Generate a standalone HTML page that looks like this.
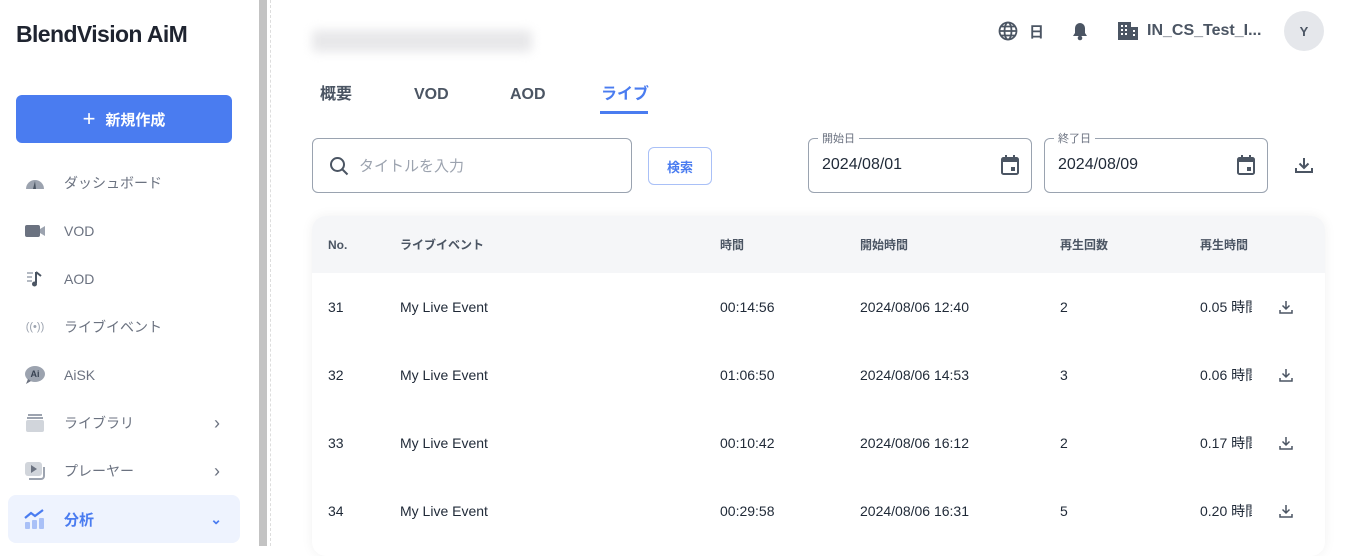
<!DOCTYPE html>
<html><head><meta charset="utf-8"><style>
*{box-sizing:border-box;margin:0;padding:0}
body{width:1363px;height:546px;overflow:hidden;background:#fff;font-family:"Liberation Sans","Noto Sans CJK JP",sans-serif;color:#1f2937;position:relative}
.abs{position:absolute}
.side{left:0;top:0;width:256px;height:546px;background:#fff}
.logo{left:16px;top:21px;font-size:23px;font-weight:bold;color:#1f2430;letter-spacing:-0.6px;line-height:26px}
.btn{left:16px;top:95px;width:216px;height:48px;background:#4a7cf0;border-radius:6px;color:#fff;font-size:15px;font-weight:bold;display:flex;align-items:center;justify-content:center;gap:10px}
.nav{left:24px;width:216px;height:48px;display:flex;align-items:center;font-size:14px;color:#6b7280}
.nav .ic{width:22px;height:22px;margin-right:18px;display:flex;align-items:center;justify-content:center}
.chev{position:absolute;right:20px;color:#6b7280;font-size:18px}
.div1{left:259px;top:0;width:8px;height:546px;background:#c3c3c3}
.div2{left:270px;top:0;height:546px;border-left:1px dashed #ddd}
.tab{top:85px;font-size:16px;font-weight:bold;color:#4b5563;line-height:20px}
.inp{border:1px solid #9aa3b0;border-radius:6px}
.lbl{font-size:11px;color:#6b7280;background:#fff;padding:0 4px}
.card{left:312px;top:216px;width:1013px;height:340px;border-radius:14px;background:#fff;box-shadow:0 0 12px rgba(0,0,0,0.06);overflow:hidden}
.hdr{left:0;top:0;width:100%;height:57px;background:#f5f6f8}
.th{font-size:12px;font-weight:bold;color:#4b5563;top:22px;line-height:14px}
.td{font-size:14px;color:#1f2937;line-height:16px}
.w{width:52px;overflow:hidden;white-space:nowrap;left:888px}
</style></head><body>
<div class="abs side">
<div class="abs logo">BlendVision AiM</div>
<div class="abs btn"><span style="font-size:22px;font-weight:normal">+</span>新規作成</div>
<div class="abs nav" style="top:159px"><span class="ic"><svg width="20" height="20"><path d="M1 16a9 9 0 0118 0z" fill="#9ca3af"/><path d="M10 8l-2 8h3z" fill="#4b5563"/></svg></span>ダッシュボード</div>
<div class="abs nav" style="top:207px"><span class="ic"><svg width="20" height="14"><rect x="0" y="1" width="15" height="12" rx="2" fill="#6b7280"/><path d="M15 5l5-3v10l-5-3z" fill="#9ca3af"/></svg></span>VOD</div>
<div class="abs nav" style="top:255px"><span class="ic"><svg width="20" height="20"><path d="M2 4h6M2 8h5M2 12h5" stroke="#9ca3af" stroke-width="1.5"/><path d="M11 3v11" stroke="#4b5563" stroke-width="2"/><circle cx="9.5" cy="15" r="2.5" fill="#4b5563"/><path d="M11 3l5 4" stroke="#4b5563" stroke-width="2"/></svg></span>AOD</div>
<div class="abs nav" style="top:303px"><span class="ic" style="font-size:11px;color:#9ca3af">((•))</span>ライブイベント</div>
<div class="abs nav" style="top:351px"><span class="ic"><svg width="22" height="22"><ellipse cx="11" cy="10" rx="10" ry="8" fill="#9ca3af"/><path d="M4 15l-2 5 5-3z" fill="#6b7280"/><text x="11" y="13" font-size="9" font-weight="bold" fill="#374151" text-anchor="middle" font-family="Liberation Sans">Ai</text></svg></span>AiSK</div>
<div class="abs nav" style="top:399px"><span class="ic"><svg width="20" height="20"><rect x="3" y="1" width="14" height="2" fill="#9ca3af"/><rect x="2" y="4" width="16" height="2" fill="#9ca3af"/><rect x="1" y="7" width="18" height="12" rx="2" fill="#d1d5db"/></svg></span>ライブラリ<span class="chev">›</span></div>
<div class="abs nav" style="top:447px"><span class="ic"><svg width="22" height="20"><rect x="1" y="1" width="17" height="14" rx="3" fill="#d1d5db"/><path d="M7 4v8l6-4z" fill="#6b7280"/><path d="M20 6v9a3 3 0 01-3 3H5" stroke="#9ca3af" stroke-width="2" fill="none"/></svg></span>プレーヤー<span class="chev">›</span></div>
<div class="abs nav" style="left:8px;width:232px;padding-left:16px;top:495px;background:#eef3fe;border-radius:8px;color:#4a7cf0;font-weight:bold;font-size:15px"><span class="ic"><svg width="22" height="22"><rect x="1" y="14" width="5" height="7" rx="1" fill="#a9c0f7"/><rect x="8" y="12" width="5" height="9" rx="1" fill="#a9c0f7"/><rect x="15" y="10" width="5" height="11" rx="1" fill="#a9c0f7"/><path d="M1 10l6-5 4 3 8-6" stroke="#4a7cf0" stroke-width="2.2" fill="none"/></svg></span>分析<span class="chev" style="color:#4a7cf0;font-size:14px;right:18px">⌄</span></div>
</div>
<div class="abs div1"></div><div class="abs div2"></div>

<div class="abs" style="left:312px;top:30px;width:220px;height:22px;background:#e8e8ea;filter:blur(5px);border-radius:4px"></div>

<div class="abs" style="left:998px;top:21px"><svg width="20" height="20" viewBox="0 0 20 20" fill="none" stroke="#4b5563" stroke-width="1.8"><circle cx="10" cy="10" r="8.5"/><ellipse cx="10" cy="10" rx="3.5" ry="8.5"/><path d="M1.5 10h17M3 5.5h14M3 14.5h14"/></svg></div>
<div class="abs" style="left:1029px;top:21px;font-size:15px;font-weight:bold;color:#4b5563">日</div>
<div class="abs" style="left:1070px;top:21px"><svg width="20" height="20"><path d="M10 2a5 5 0 00-5 5v5l-2 3h14l-2-3V7a5 5 0 00-5-5z" fill="#4b5563"/><circle cx="10" cy="17" r="2.3" fill="#4b5563"/></svg></div>
<div class="abs" style="left:1118px;top:22px"><svg width="20" height="18"><rect x="0" y="0" width="13" height="18" fill="#4b5563"/><rect x="13" y="5" width="7" height="13" fill="#4b5563"/><g fill="#fff"><rect x="3" y="3" width="2" height="2"/><rect x="7" y="3" width="2" height="2"/><rect x="3" y="7" width="2" height="2"/><rect x="7" y="7" width="2" height="2"/><rect x="3" y="11" width="2" height="2"/><rect x="7" y="11" width="2" height="2"/><rect x="15" y="8" width="2" height="2"/><rect x="15" y="12" width="2" height="2"/></g></svg></div>
<div class="abs" style="left:1147px;top:22px;font-size:16px;font-weight:bold;color:#4b5563">IN_CS_Test_I...</div>
<div class="abs" style="left:1284px;top:11px;width:40px;height:40px;border-radius:50%;background:#e5e7eb;display:flex;align-items:center;justify-content:center;font-size:13px;font-weight:bold;color:#4b5563">Y</div>

<div class="abs tab" style="left:320px">概要</div>
<div class="abs tab" style="left:414px">VOD</div>
<div class="abs tab" style="left:510px">AOD</div>
<div class="abs tab" style="left:601px;color:#4a7cf0">ライブ</div>
<div class="abs" style="left:600px;top:111px;width:48px;height:3px;background:#4a7cf0"></div>

<div class="abs inp" style="left:312px;top:138px;width:320px;height:55px"></div>
<div class="abs" style="left:329px;top:156px"><svg width="20" height="20" fill="none" stroke="#4b5563" stroke-width="2"><circle cx="8.5" cy="8.5" r="6.5"/><path d="M13.5 13.5l5 5"/></svg></div>
<div class="abs" style="left:359px;top:155px;font-size:15px;color:#9ca3af">タイトルを入力</div>
<div class="abs" style="left:648px;top:147px;width:64px;height:38px;border:1px solid #a9c0f7;border-radius:6px;display:flex;align-items:center;justify-content:center;font-size:13px;font-weight:bold;color:#4a7cf0">検索</div>

<div class="abs inp" style="left:808px;top:138px;width:224px;height:55px"></div>
<div class="abs lbl" style="left:818px;top:130px">開始日</div>
<div class="abs" style="left:822px;top:156px;font-size:16px">2024/08/01</div>
<div class="abs inp" style="left:1044px;top:138px;width:224px;height:55px"></div>
<div class="abs lbl" style="left:1054px;top:130px">終了日</div>
<div class="abs" style="left:1058px;top:156px;font-size:16px">2024/08/09</div>
<svg class="abs" style="left:1000px;top:155px" width="20" height="20"><rect x="2" y="3" width="16" height="16" rx="1.5" fill="none" stroke="#4b5563" stroke-width="2"/><rect x="2" y="3" width="16" height="4" fill="#4b5563"/><rect x="5" y="0" width="2" height="4" fill="#4b5563"/><rect x="13" y="0" width="2" height="4" fill="#4b5563"/><rect x="11" y="12" width="4" height="4" fill="#4b5563"/></svg>
<svg class="abs" style="left:1236px;top:155px" width="20" height="20"><rect x="2" y="3" width="16" height="16" rx="1.5" fill="none" stroke="#4b5563" stroke-width="2"/><rect x="2" y="3" width="16" height="4" fill="#4b5563"/><rect x="5" y="0" width="2" height="4" fill="#4b5563"/><rect x="13" y="0" width="2" height="4" fill="#4b5563"/><rect x="11" y="12" width="4" height="4" fill="#4b5563"/></svg>
<svg class="abs" style="left:1295px;top:156px" width="18" height="18" fill="none" stroke="#4b5563" stroke-width="2"><path d="M9 2v10M4.5 7.5L9 12l4.5-4.5M1 12v4h16v-4"/></svg>

<div class="abs card">
<div class="abs hdr"></div>
<div class="abs th" style="left:16px">No.</div>
<div class="abs th" style="left:88px">ライブイベント</div>
<div class="abs th" style="left:408px">時間</div>
<div class="abs th" style="left:548px">開始時間</div>
<div class="abs th" style="left:748px">再生回数</div>
<div class="abs th" style="left:888px">再生時間</div>

<div class="abs td" style="left:16px;top:83px">31</div><div class="abs td" style="left:88px;top:83px">My Live Event</div><div class="abs td" style="left:408px;top:83px">00:14:56</div><div class="abs td" style="left:548px;top:83px">2024/08/06 12:40</div><div class="abs td" style="left:748px;top:83px">2</div><div class="abs td w" style="top:83px">0.05 時間</div>
<div class="abs td" style="left:16px;top:151px">32</div><div class="abs td" style="left:88px;top:151px">My Live Event</div><div class="abs td" style="left:408px;top:151px">01:06:50</div><div class="abs td" style="left:548px;top:151px">2024/08/06 14:53</div><div class="abs td" style="left:748px;top:151px">3</div><div class="abs td w" style="top:151px">0.06 時間</div>
<div class="abs td" style="left:16px;top:219px">33</div><div class="abs td" style="left:88px;top:219px">My Live Event</div><div class="abs td" style="left:408px;top:219px">00:10:42</div><div class="abs td" style="left:548px;top:219px">2024/08/06 16:12</div><div class="abs td" style="left:748px;top:219px">2</div><div class="abs td w" style="top:219px">0.17 時間</div>
<div class="abs td" style="left:16px;top:287px">34</div><div class="abs td" style="left:88px;top:287px">My Live Event</div><div class="abs td" style="left:408px;top:287px">00:29:58</div><div class="abs td" style="left:548px;top:287px">2024/08/06 16:31</div><div class="abs td" style="left:748px;top:287px">5</div><div class="abs td w" style="top:287px">0.20 時間</div>

<svg class="abs" style="left:966px;top:83px" width="16" height="16" fill="none" stroke="#4b5563" stroke-width="1.5"><path d="M8 2v8M4.5 6.5L8 10l3.5-3.5M2 11v3h12v-3"/></svg>
<svg class="abs" style="left:966px;top:151px" width="16" height="16" fill="none" stroke="#4b5563" stroke-width="1.5"><path d="M8 2v8M4.5 6.5L8 10l3.5-3.5M2 11v3h12v-3"/></svg>
<svg class="abs" style="left:966px;top:219px" width="16" height="16" fill="none" stroke="#4b5563" stroke-width="1.5"><path d="M8 2v8M4.5 6.5L8 10l3.5-3.5M2 11v3h12v-3"/></svg>
<svg class="abs" style="left:966px;top:287px" width="16" height="16" fill="none" stroke="#4b5563" stroke-width="1.5"><path d="M8 2v8M4.5 6.5L8 10l3.5-3.5M2 11v3h12v-3"/></svg>
</div>
</body></html>
